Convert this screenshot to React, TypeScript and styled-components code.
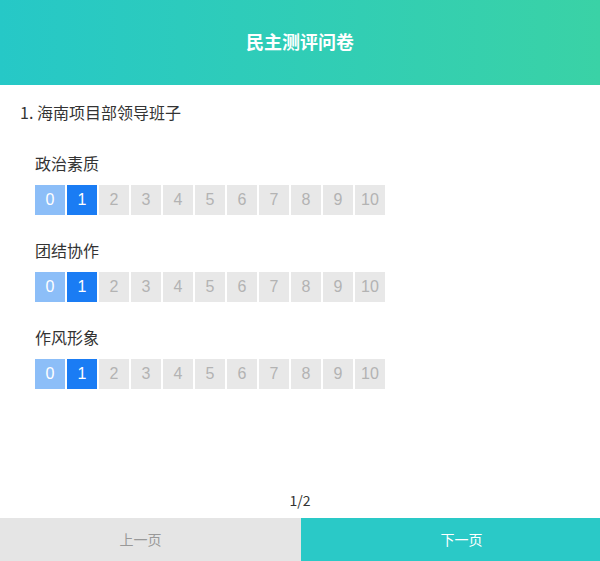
import React, { useState } from "react";
import styled, { createGlobalStyle } from "styled-components";

const Global = createGlobalStyle`
  html, body { margin: 0; padding: 0; }
  body { font-family: "Noto Sans CJK SC", "Noto Sans", sans-serif; background: #fff; color: #333; }
`;

const Page = styled.div`
  min-height: 100vh;
  display: flex;
  flex-direction: column;
`;

const Header = styled.header`
  height: 85px;
  box-sizing: border-box;
  padding-bottom: 3px;
  display: flex;
  align-items: center;
  justify-content: center;
  background: linear-gradient(90deg, #26c8c7 0%, #3ad2a6 100%);
  color: #fff;
  font-size: 18px;
  font-weight: bold;
`;

const Content = styled.main`
  flex: 1;
  padding: 15px 20px 0;
`;

const Question = styled.div`
  font-size: 16px;
  line-height: 24px;
  color: #333;
`;

const Group = styled.section<{ $first?: boolean }>`
  padding-left: 15px;
  margin-top: ${(p) => (p.$first ? "27px" : "23px")};
`;

const Label = styled.div`
  font-size: 16px;
  line-height: 24px;
  color: #333;
`;

const Scale = styled.div`
  display: flex;
  gap: 2px;
  margin-top: 10px;
`;

const Cell = styled.div<{ $state: "low" | "on" | "off" }>`
  width: 30px;
  height: 30px;
  display: flex;
  align-items: center;
  justify-content: center;
  font-family: "Liberation Sans", "Noto Sans CJK SC", sans-serif;
  font-size: 16px;
  cursor: pointer;
  background: ${(p) => (p.$state === "on" ? "#1a7cf4" : p.$state === "low" ? "#8cbef8" : "#e8e8e8")};
  color: ${(p) => (p.$state === "off" ? "#b3b3b3" : "#fff")};
`;

const Pager = styled.div`
  text-align: center;
  font-size: 14px;
  line-height: 20px;
  padding-bottom: 8px;
  color: #333;
`;

const Buttons = styled.div`
  display: flex;
  height: 43px;
`;

const NavButton = styled.button<{ $primary?: boolean }>`
  border: none;
  margin: 0;
  font-family: inherit;
  font-size: 14px;
  line-height: 20px;
  width: ${(p) => (p.$primary ? "auto" : "301px")};
  flex: ${(p) => (p.$primary ? "1" : "none")};
  padding: ${(p) => (p.$primary ? "0 0 2px 22px" : "0 20px 2px 0")};
  background: ${(p) => (p.$primary ? "#2ac9c7" : "#e5e5e5")};
  color: ${(p) => (p.$primary ? "#fff" : "#999")};
  cursor: pointer;
`;

const items = ["政治素质", "团结协作", "作风形象"];

export default function App() {
  const [scores, setScores] = useState<number[]>([1, 1, 1]);
  return (
    <Page>
      <Global />
      <Header>民主测评问卷</Header>
      <Content>
        <Question>1. 海南项目部领导班子</Question>
        {items.map((name, i) => (
          <Group key={name} $first={i === 0}>
            <Label>{name}</Label>
            <Scale>
              {Array.from({ length: 11 }, (_, n) => (
                <Cell
                  key={n}
                  $state={n === scores[i] ? "on" : n < scores[i] ? "low" : "off"}
                  onClick={() => setScores((s) => s.map((v, j) => (j === i ? n : v)))}
                >
                  {n}
                </Cell>
              ))}
            </Scale>
          </Group>
        ))}
      </Content>
      <Pager>1/2</Pager>
      <Buttons>
        <NavButton>上一页</NavButton>
        <NavButton $primary>下一页</NavButton>
      </Buttons>
    </Page>
  );
}
